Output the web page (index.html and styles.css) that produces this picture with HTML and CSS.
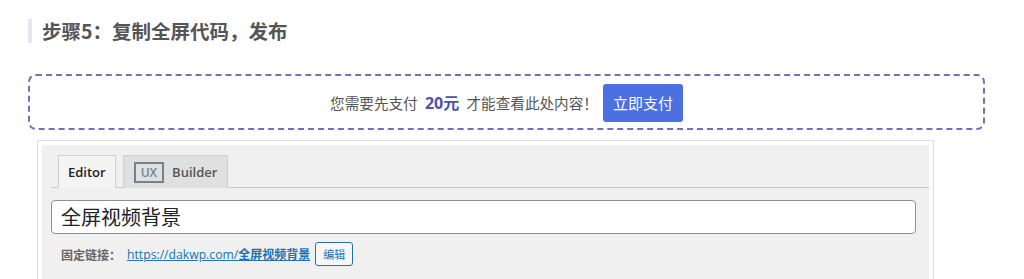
FILE: index.html
```html
<!DOCTYPE html>
<html lang="zh-CN">
<head>
    <meta charset="UTF-8">
    <meta name="viewport" content="width=device-width, initial-scale=1.0">
    <title>步骤5：复制全屏代码，发布</title>
    <link rel="stylesheet" href="styles.css">
</head>
<body>
    <div class="post">
        <h3 class="step">步骤5：复制全屏代码，发布</h3>

        <div class="paywall">
            <span class="notice">您需要先支付 <b class="price">20元</b> 才能查看此处内容！</span>
            <a class="pay-btn" href="#">立即支付</a>
        </div>

        <div class="shot">
            <div class="panel">
                <div class="tabs">
                    <span class="tab active">Editor</span>
                    <span class="tab"><span class="ux">UX</span>Builder</span>
                </div>
                <div class="title-box">全屏视频背景</div>
                <div class="permalink">
                    <span class="label">固定链接：</span>
                    <a class="link" href="#">https://dakwp.com/<b>全屏视频背景</b></a>
                    <span class="edit-btn">编辑</span>
                </div>
            </div>
        </div>
    </div>
</body>
</html>
```

FILE: styles.css
```css
* { box-sizing: border-box; }
body { margin: 0; background: #fff; font-family: "Noto Sans CJK SC", "Noto Sans", sans-serif; }
.post { width: 985px; padding: 19px 0 0 28px; }
.step { margin: 0; border-left: 4px solid #e4e6f4; padding-left: 10px; height: 24px; line-height: 24px; font-size: 19.5px; font-weight: bold; color: #555; }

.paywall { margin-top: 31px; height: 56px; border: 2px dashed #7171b6; border-radius: 8px; display: flex; align-items: center; justify-content: center; gap: 5px; }
.notice { font-size: 14.6px; color: #555; }
.price { color: #4f4fae; font-size: 16px; padding: 0 4px; font-family: "Open Sans", "Noto Sans CJK SC", sans-serif; }
.pay-btn { display: inline-block; background: #4a70e2; color: #fff; text-decoration: none; font-size: 15px; height: 38px; line-height: 38px; padding: 0 10px; border-radius: 3px; margin-top: 2px; }

.shot { margin: 10px 0 0 9px; width: 897px; border: 1px solid #dcdcdc; border-bottom: 0; padding: 4px 4px 0 4px; height: 140px; }
.panel { background: #f0f0f0; height: 100%; padding: 10px 13px 0 9px; }
.tabs { display: flex; gap: 7px; border-bottom: 1px solid #c9c9c9; padding-left: 7px; margin-right: -13px; }
.tab { font-family: "Open Sans", sans-serif; font-size: 13px; font-weight: 600; color: #555; height: 33px; line-height: 32px; padding: 0 10px; border: 1px solid #cfcfcf; border-bottom: 0; background: #e0e0e0; display: flex; align-items: center; margin-bottom: -1px; }
.tab.active { background: #f4f4f4; color: #222; padding: 0 9px; border-bottom: 1px solid #f4f4f4; }
.ux { border: 2px solid #6f8394; color: #6f8394; font-size: 12px; line-height: 17px; padding: 0 5px; margin-right: 8px; font-weight: 600; }
.title-box { margin-top: 12px; height: 34px; line-height: 32px; background: #fff; border: 1px solid #8c8f94; border-radius: 4px; padding: 0 9px; font-size: 20px; color: #1d2327; }
.permalink { margin-top: 8px; display: flex; align-items: center; font-size: 12px; padding-left: 10px; }
.label { color: #666; font-weight: bold; margin-right: 6px; }
.link { color: #2271b1; font-family: "Open Sans", "Noto Sans CJK SC", sans-serif; font-size: 12.2px; }
.link b { font-family: "Noto Sans CJK SC", sans-serif; font-size: 12px; }
.edit-btn { margin-left: 5px; border: 1px solid #2271b1; color: #2271b1; background: #f6f7f7; border-radius: 3px; height: 24px; line-height: 22px; padding: 0 7px; font-size: 11px; }
```
